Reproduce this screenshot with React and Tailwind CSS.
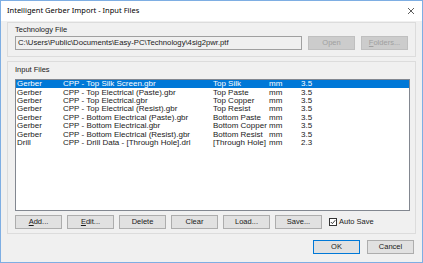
import React from "react";

const rows = [
  ["Gerber", "CPP - Top Silk Screen.gbr", "Top Silk", "mm", "3.5"],
  ["Gerber", "CPP - Top Electrical (Paste).gbr", "Top Paste", "mm", "3.5"],
  ["Gerber", "CPP - Top Electrical.gbr", "Top Copper", "mm", "3.5"],
  ["Gerber", "CPP - Top Electrical (Resist).gbr", "Top Resist", "mm", "3.5"],
  ["Gerber", "CPP - Bottom Electrical (Paste).gbr", "Bottom Paste", "mm", "3.5"],
  ["Gerber", "CPP - Bottom Electrical.gbr", "Bottom Copper", "mm", "3.5"],
  ["Gerber", "CPP - Bottom Electrical (Resist).gbr", "Bottom Resist", "mm", "3.5"],
  ["Drill", "CPP - Drill Data - [Through Hole].drl", "[Through Hole]", "mm", "2.3"],
];

function Btn({ children, disabled, def, w = "w-[47px]" }) {
  return (
    <div
      className={
        "flex h-[14px] items-center justify-center border text-[7.5px] " +
        w +
        " " +
        (disabled
          ? "border-[#bfbfbf] bg-[#cccccc] text-[#a0a0a0]"
          : def
          ? "border-[#0078d7] bg-[#e1e1e1] text-[#1a1a1a]"
          : "border-[#adadad] bg-[#e1e1e1] text-[#1a1a1a]")
      }
    >
      {children}
    </div>
  );
}

export default function App() {
  return (
    <div
      className="flex h-[263px] w-[423px] flex-col border border-[#7eaee3] bg-[#f0f0f0]"
      style={{ fontFamily: '"Liberation Sans", Arial, sans-serif' }}
    >
      {/* title bar */}
      <div className="flex h-[20px] shrink-0 items-center justify-between bg-white pl-[6px] pr-[6px]">
        <span className="text-[7.5px] text-black" style={{ fontFamily: '"Noto Sans", sans-serif' }}>
          Intelligent Gerber Import - Input Files
        </span>
        <svg width="8" height="8" viewBox="0 0 8 8" className="mr-[1px]">
          <path d="M1 1 L7 7 M7 1 L1 7" stroke="#333" strokeWidth="0.8" />
        </svg>
      </div>

      <div className="flex flex-1 flex-col px-[6px] pt-[1px]">
        {/* Technology File group */}
        <div className="flex h-[35px] flex-col border border-[#dcdcdc] px-[7px]">
          <div className="mt-[2px] text-[7.5px] leading-[9px] text-[#1a1a1a]">Technology File</div>
          <div className="mt-[2px] flex items-center gap-[6px]">
            <div className="flex h-[14px] w-[287px] items-center border border-[#a0a0a0] bg-[#f0f0f0] pl-[2px] text-[7.7px] text-[#1a1a1a]">
              C:\Users\Public\Documents\Easy-PC\Technology\4sig2pwr.ptf
            </div>
            <Btn disabled>Open</Btn>
            <Btn disabled>
              <span className="underline">F</span>olders...
            </Btn>
          </div>
        </div>

        {/* Input Files group */}
        <div className="mt-[4px] flex h-[173px] flex-col border border-[#dcdcdc] px-[7px]">
          <div className="mt-[3px] text-[7.5px] leading-[9px] text-[#1a1a1a]">Input Files</div>
          <div className="mt-[5px] h-[132px] w-[395px] border border-[#828790] bg-white">
            {rows.map((r, i) => (
              <div
                key={i}
                className={
                  "grid h-[8.43px] grid-cols-[46px_150px_56px_32px_1fr] items-center pl-[1px] text-[8px] leading-[8px] " +
                  (i === 0 ? "bg-[#0078d7] text-white" : "text-[#1a1a1a]")
                }
              >
                {r.map((c, j) => (
                  <span key={j} className="whitespace-nowrap">
                    {c}
                  </span>
                ))}
              </div>
            ))}
          </div>
          <div className="mt-[4px] flex items-center gap-[5px]">
            <Btn>
              <span className="underline">A</span>dd...
            </Btn>
            <Btn>
              <span className="underline">E</span>dit...
            </Btn>
            <Btn>Delete</Btn>
            <Btn>Clear</Btn>
            <Btn>Load...</Btn>
            <Btn>Save...</Btn>
            <div className="ml-[2px] flex items-center gap-[2px] text-[7.5px] text-[#1a1a1a]">
              <div className="flex h-[8px] w-[8px] items-center justify-center border border-[#333] bg-white">
                <svg width="6" height="6" viewBox="0 0 6 6">
                  <path d="M0.8 3 L2.4 4.6 L5.3 1.2" fill="none" stroke="#222" strokeWidth="0.9" />
                </svg>
              </div>
              Auto Save
            </div>
          </div>
        </div>

        {/* OK / Cancel */}
        <div className="mt-[6px] flex justify-end gap-[7px] pr-[2px]">
          <Btn def>OK</Btn>
          <Btn>Cancel</Btn>
        </div>
      </div>
    </div>
  );
}
